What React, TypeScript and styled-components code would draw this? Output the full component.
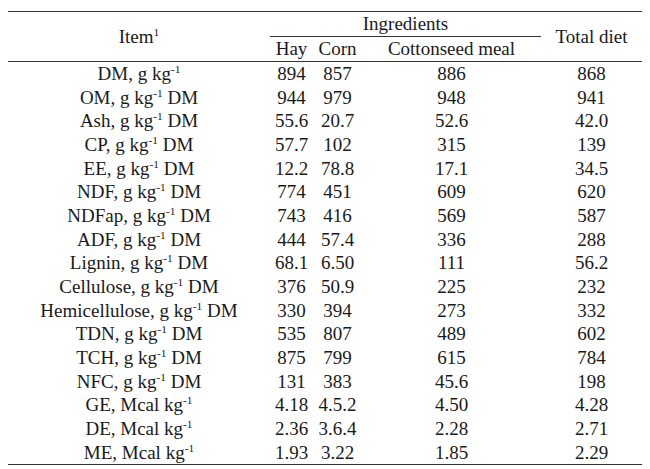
import React from 'react'
import styled, { createGlobalStyle } from 'styled-components'

const GlobalStyle = createGlobalStyle`
  html, body {
    margin: 0;
    padding: 0;
    background: #ffffff;
  }
`

const Table = styled.table`
  margin: 11px 0 0 8px;
  width: 634px;
  border-collapse: collapse;
  table-layout: fixed;
  font-family: 'Liberation Serif', 'Times New Roman', serif;
  font-size: 19px;
  color: #1a1a1a;
  border-top: 1px solid #333;
  border-bottom: 1px solid #333;
`

const Col = styled.col<{ $w: number }>`
  width: ${(p) => p.$w}px;
`

const HeadCell = styled.th<{ $rule?: boolean }>`
  font-weight: normal;
  text-align: center;
  padding: 0;
  height: 24px;
  line-height: 24px;
  border-bottom: ${(p) => (p.$rule ? '1px solid #333' : 'none')};
`

const HeadRow = styled.tr`
  border-bottom: 1px solid #333;
`

const Row = styled.tr`
  height: 23.7px;
`

const Cell = styled.td`
  padding: 0;
  text-align: center;
  line-height: 23px;
  white-space: nowrap;
`

const Sup = styled.sup`
  font-size: 0.6em;
  line-height: 0;
  vertical-align: 0.6em;
`

type Item = { name: string; unit: 'kg' | 'kgDM' | 'mcal'; v: string[] }

const rows: Item[] = [
  { name: 'DM', unit: 'kg', v: ['894', '857', '886', '868'] },
  { name: 'OM', unit: 'kgDM', v: ['944', '979', '948', '941'] },
  { name: 'Ash', unit: 'kgDM', v: ['55.6', '20.7', '52.6', '42.0'] },
  { name: 'CP', unit: 'kgDM', v: ['57.7', '102', '315', '139'] },
  { name: 'EE', unit: 'kgDM', v: ['12.2', '78.8', '17.1', '34.5'] },
  { name: 'NDF', unit: 'kgDM', v: ['774', '451', '609', '620'] },
  { name: 'NDFap', unit: 'kgDM', v: ['743', '416', '569', '587'] },
  { name: 'ADF', unit: 'kgDM', v: ['444', '57.4', '336', '288'] },
  { name: 'Lignin', unit: 'kgDM', v: ['68.1', '6.50', '111', '56.2'] },
  { name: 'Cellulose', unit: 'kgDM', v: ['376', '50.9', '225', '232'] },
  { name: 'Hemicellulose', unit: 'kgDM', v: ['330', '394', '273', '332'] },
  { name: 'TDN', unit: 'kgDM', v: ['535', '807', '489', '602'] },
  { name: 'TCH', unit: 'kgDM', v: ['875', '799', '615', '784'] },
  { name: 'NFC', unit: 'kgDM', v: ['131', '383', '45.6', '198'] },
  { name: 'GE', unit: 'mcal', v: ['4.18', '4.5.2', '4.50', '4.28'] },
  { name: 'DE', unit: 'mcal', v: ['2.36', '3.6.4', '2.28', '2.71'] },
  { name: 'ME', unit: 'mcal', v: ['1.93', '3.22', '1.85', '2.29'] },
]

const Label = ({ item }: { item: Item }) => {
  if (item.unit === 'mcal') {
    return (
      <>
        {item.name}, Mcal kg<Sup>-1</Sup>
      </>
    )
  }
  return (
    <>
      {item.name}, g kg<Sup>-1</Sup>
      {item.unit === 'kgDM' ? ' DM' : ''}
    </>
  )
}

export default function App() {
  return (
    <>
      <GlobalStyle />
      <Table>
        <colgroup>
          <Col $w={262} />
          <Col $w={43} />
          <Col $w={49} />
          <Col $w={179} />
          <Col $w={101} />
        </colgroup>
        <thead>
          <tr>
            <HeadCell rowSpan={2}>
              Item<Sup>1</Sup>
            </HeadCell>
            <HeadCell colSpan={3} $rule>
              Ingredients
            </HeadCell>
            <HeadCell rowSpan={2}>Total diet</HeadCell>
          </tr>
          <HeadRow>
            <HeadCell>Hay</HeadCell>
            <HeadCell>Corn</HeadCell>
            <HeadCell>Cottonseed meal</HeadCell>
          </HeadRow>
        </thead>
        <tbody>
          {rows.map((r) => (
            <Row key={r.name}>
              <Cell>
                <Label item={r} />
              </Cell>
              {r.v.map((x, i) => (
                <Cell key={i}>{x}</Cell>
              ))}
            </Row>
          ))}
        </tbody>
      </Table>
    </>
  )
}
